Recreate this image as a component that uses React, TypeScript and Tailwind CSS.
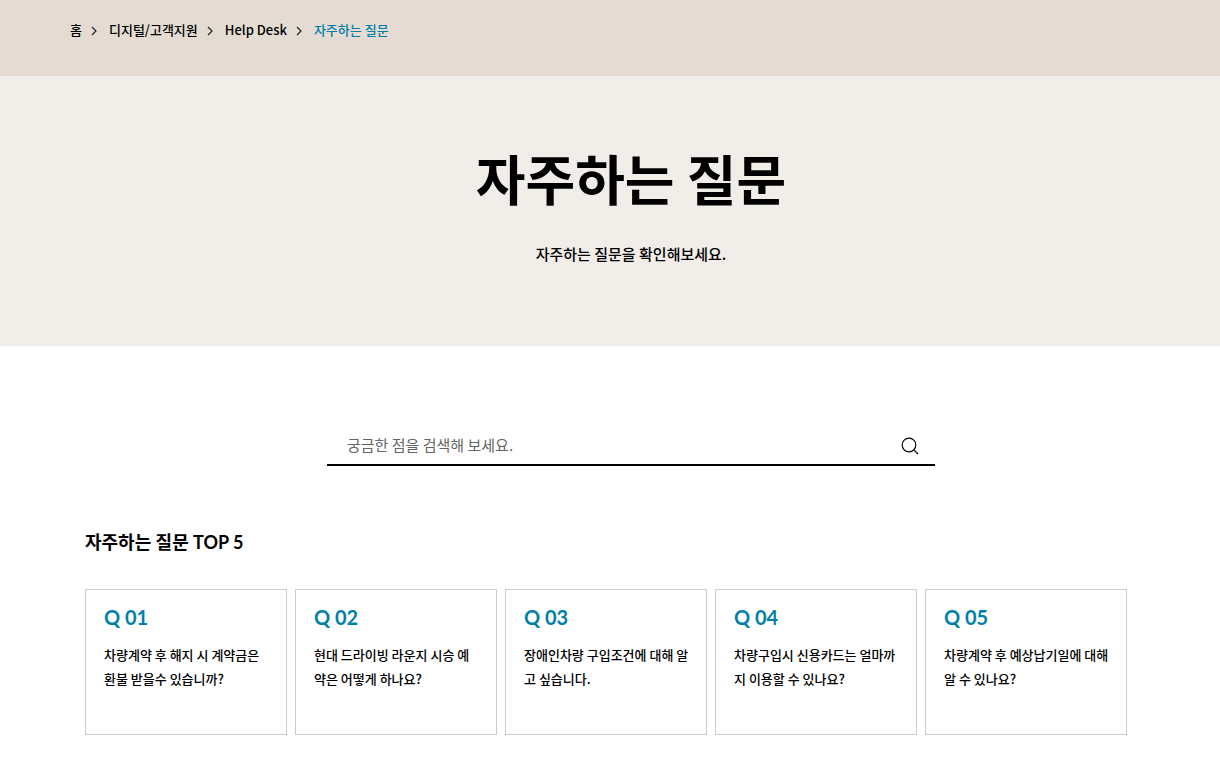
import React, { useState } from 'react';

interface Question {
  no: string;
  title: string;
}

const breadcrumbs = ['홈', '디지털/고객지원', 'Help Desk'];

const questions: Question[] = [
  { no: 'Q 01', title: '차량계약 후 해지 시 계약금은 환불 받을수 있습니까?' },
  { no: 'Q 02', title: '현대 드라이빙 라운지 시승 예약은 어떻게 하나요?' },
  { no: 'Q 03', title: '장애인차량 구입조건에 대해 알고 싶습니다.' },
  { no: 'Q 04', title: '차량구입시 신용카드는 얼마까지 이용할 수 있나요?' },
  { no: 'Q 05', title: '차량계약 후 예상납기일에 대해 알 수 있나요?' },
];

const Breadcrumb: React.FC = () => (
  <nav aria-label="breadcrumb" className="bg-[#e4dcd3] h-[76px] pl-[70px] pt-5">
    <ol className="flex items-center text-[13px] leading-5 font-medium">
      {breadcrumbs.map(item => (
        <li key={item} className="flex items-center">
          <a href="#">{item}</a>
          <svg className="w-[6px] h-[10px] ml-[9px] mr-3 mt-px" viewBox="0 0 6 10" fill="none" stroke="#222" strokeWidth="1.2">
            <path d="M1 1l4 4-4 4" />
          </svg>
        </li>
      ))}
      <li>
        <a href="#" aria-current="page" className="text-[#007fa8]">자주하는 질문</a>
      </li>
    </ol>
  </nav>
);

const SearchBox: React.FC = () => {
  const [keyword, setKeyword] = useState('');

  return (
    <form
      onSubmit={(e) => e.preventDefault()}
      className="flex items-center w-full max-w-[608px] h-10 mx-auto border-b-2 border-black"
    >
      <input
        type="text"
        aria-label="검색어"
        placeholder="궁금한 점을 검색해 보세요."
        value={keyword}
        onChange={(e) => setKeyword(e.target.value)}
        className="flex-1 min-w-0 h-full pl-5 pb-[2px] text-[15px] leading-6 outline-none placeholder:text-[#666]"
      />
      <button type="submit" aria-label="검색" className="w-[50px] h-full pt-[2px] flex items-center justify-center">
        <svg className="w-[18px] h-[18px]" viewBox="0 0 18 18" fill="none" stroke="#000" strokeWidth="1.2">
          <circle cx="8" cy="8" r="6.8" />
          <path d="M12.8 12.8l4.2 4.2" />
        </svg>
      </button>
    </form>
  );
};

const App: React.FC = () => {
  return (
    <div className="min-h-screen bg-white text-black font-['Noto_Sans_CJK_KR',sans-serif]">
      <Breadcrumb />

      <header className="bg-[#f1eee9] h-[270px] pl-[42px] pt-[62px] text-center">
        <h1 className="text-[54px] leading-20 font-bold">자주하는 질문</h1>
        <p className="mt-6 text-[15px] leading-6 font-medium">자주하는 질문을 확인해보세요.</p>
      </header>

      <main>
        <div className="pl-[42px] pt-20">
          <SearchBox />
        </div>

        <section className="pl-[85px] pr-[93px] pt-15 pb-10">
          <h2 className="font-[Lato,'Noto_Sans_CJK_KR',sans-serif] text-[18px] leading-8 font-bold">자주하는 질문 TOP 5</h2>
          <ul className="grid grid-cols-5 gap-2 mt-[31px]">
            {questions.map(q => (
              <li key={q.no}>
                <a href="#" className="block min-h-[146px] border border-[#ccc] pl-[18px] pr-4 pt-[11px]">
                  <strong className="block font-[Lato,sans-serif] text-[20px] leading-8 font-bold text-[#007fa8]">{q.no}</strong>
                  <span className="block mt-[10px] text-[13px] leading-6 font-medium">{q.title}</span>
                </a>
              </li>
            ))}
          </ul>
        </section>
      </main>
    </div>
  );
};

export default App;
